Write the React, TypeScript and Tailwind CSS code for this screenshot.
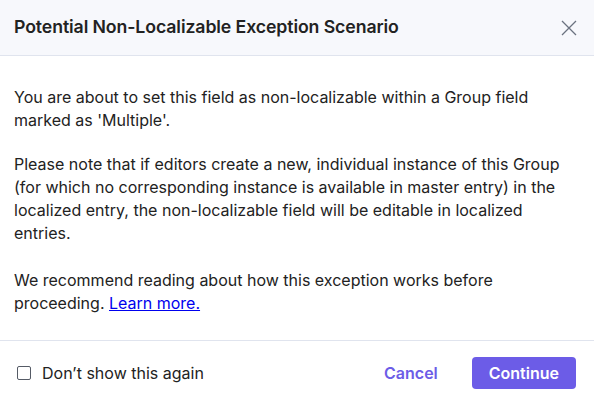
import React from 'react';

const App: React.FC = () => {
  return (
    <div className="w-[594px] h-[402px] bg-white flex flex-col text-[#222222]" style={{ fontFamily: 'Inter, "Noto Sans", sans-serif' }}>
      {/* Header */}
      <div className="h-[56px] bg-[#f7f8fc] border-b border-[#e0e4ee] flex items-center justify-between pl-[14px] pr-[16px] shrink-0">
        <h2 className="text-[17.7px] font-semibold tracking-[-0.1px]">Potential Non-Localizable Exception Scenario</h2>
        <button className="text-[#6b7280]">
          <svg width="18" height="18" viewBox="0 0 18 18" fill="none" stroke="currentColor" strokeWidth="1.3">
            <path d="M2 2L16 16M16 2L2 16" />
          </svg>
        </button>
      </div>

      {/* Body */}
      <div className="flex-1 pl-[14px] pr-[18px] pt-[30px] text-[16px] leading-[23px] text-[#222222]">
        <p className="mb-[21px]">
          You are about to set this field as non-localizable within a Group field marked as 'Multiple'.
        </p>
        <p className="mb-[24px]">
          Please note that if editors create a new, individual instance of this Group (for which no corresponding instance is available in master entry) in the localized entry, the non-localizable field will be editable in localized entries.
        </p>
        <p>
          We recommend reading about how this exception works before proceeding.{' '}
          <a href="#" className="text-[#0000ee] underline">Learn more.</a>
        </p>
      </div>

      {/* Footer */}
      <div className="h-[62px] border-t border-[#e0e4ee] flex items-center justify-between pl-[17px] pr-[18px] pt-[2px] shrink-0">
        <label className="flex items-center gap-[11px] text-[16px]">
          <span className="w-[14px] h-[14px] border border-[#555b66] rounded-[2px] bg-white" />
          <span>Don’t show this again</span>
        </label>
        <div className="flex items-center gap-[34px]">
          <button className="text-[#6c5ce7] text-[16px] font-semibold">Cancel</button>
          <button className="bg-[#6c5ce7] text-white text-[16px] font-semibold h-[32px] px-[17px] rounded-[4px]">Continue</button>
        </div>
      </div>
    </div>
  );
};

export default App;
